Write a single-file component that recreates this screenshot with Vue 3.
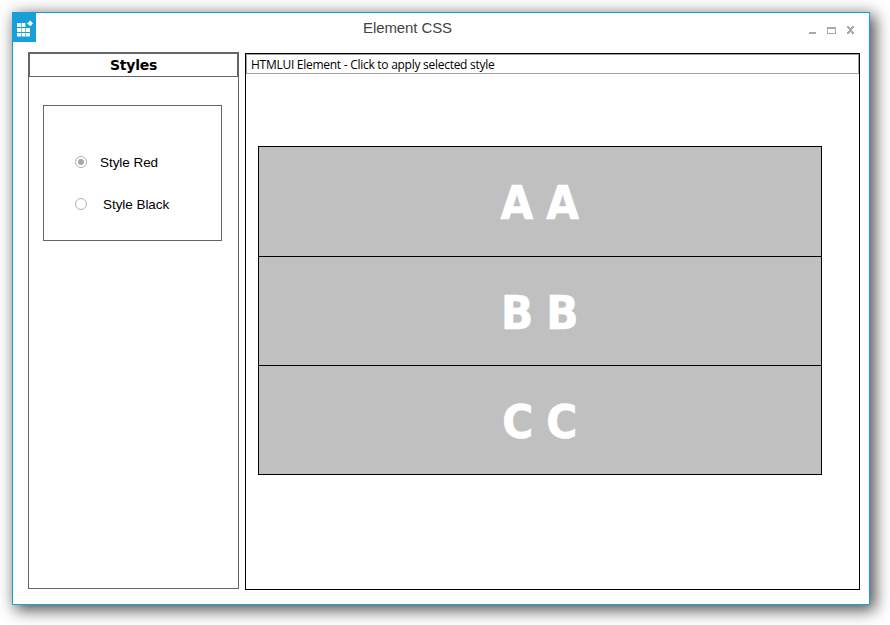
<script setup>
import { ref } from 'vue'

const selected = ref('red')
const styles = [
  { id: 'red', label: 'Style Red' },
  { id: 'black', label: 'Style Black' },
]
const rows = [
  { id: 'a', text: 'A A' },
  { id: 'b', text: 'B B' },
  { id: 'c', text: 'C C' },
]
</script>

<template>
  <div class="desktop">
    <div class="window">
      <header class="titlebar">
        <div class="logo">
          <svg width="24" height="30" viewBox="0 0 24 30">
            <path
              fill="#fff"
              d="M5 11h4v4H5zM9.6 11h3.8v4H9.6zM5 16h4v4H5zM9.6 16h3.8v4H9.6zM14 16h4v4h-4zM5 21h4v3.6H5zM9.6 21h3.8v3.6H9.6zM14 21h4v3.6h-4zM18.2 8.6l2.8 2.8-2.8 2.8-3.2-2.6z"
            />
          </svg>
        </div>
        <h1 class="title">Element CSS</h1>
        <div class="controls">
          <svg width="44" height="9" viewBox="0 0 44 9" shape-rendering="crispEdges" fill="#a9a9a9">
            <path d="M0 6h7v2H0z" />
            <path fill-rule="evenodd" d="M18 1h9v7h-9zM19 3v4h7V3z" />
            <path d="M38 0h2v1h1v1h1V1h1V0h2v2h-1v1h-1v2h1v1h1v2h-2V7h-1V6h-1v1h-1v1h-2V6h1V5h1V3h-1V2h-1z" />
          </svg>
        </div>
      </header>
      <main class="content">
        <section class="panel styles-panel">
          <h2 class="styles-title"><span>Styles</span></h2>
          <div class="group">
            <label v-for="s in styles" :key="s.id" class="option" :class="s.id" @click="selected = s.id">
              <span class="radio" :class="{ checked: selected === s.id }"></span>
              <span class="label">{{ s.label }}</span>
            </label>
          </div>
        </section>
        <section class="panel element-panel">
          <div class="element-title"><span>HTMLUI Element - Click to apply selected style</span></div>
          <div class="table">
            <div v-for="r in rows" :key="r.id" class="row" :class="'row-' + r.id">
              <span>{{ r.text }}</span>
            </div>
          </div>
        </section>
      </main>
    </div>
  </div>
</template>

<style>
body {
  background: #fff;
  overflow: hidden;
}
</style>

<style scoped>
* {
  box-sizing: border-box;
}
.desktop {
  width: 890px;
  height: 625px;
  padding: 12px;
  overflow: hidden;
}
.window {
  width: 858px;
  height: 593px;
  border: 1px solid #1a9fdb;
  background: #fff;
  box-shadow: 4px 4px 15px 1px rgba(0, 0, 0, 0.7);
}
.titlebar {
  display: flex;
  height: 39px;
}
.logo {
  width: 24px;
  height: 30px;
  margin: -1px 0 0 -1px;
  background: #169fdb;
}
.logo svg {
  display: block;
}
.title {
  flex: 1;
  margin: 0 0 0 327px;
  font: 400 15px/30px "Liberation Sans", Arial, sans-serif;
  letter-spacing: -0.1px;
  color: #444;
}
.controls {
  width: 45px;
  margin: 13px 15px 0 0;
}
.controls svg {
  display: block;
  overflow: visible;
}
.content {
  display: flex;
  padding-left: 15px;
}
.panel {
  height: 537px;
}
.styles-panel {
  width: 211px;
  border: 1px solid #666;
}
.styles-title {
  height: 24px;
  margin: 0;
  border: 1px solid #666;
  font: 700 14px/22px "DejaVu Sans", sans-serif;
  letter-spacing: -0.25px;
  text-align: center;
  color: #000;
}
.group {
  width: 179px;
  height: 136px;
  margin: 28px 0 0 14px;
  padding: 46px 0 0 31px;
  border: 1px solid #666;
}
.option {
  display: flex;
  align-items: center;
  height: 20px;
  margin-bottom: 22px;
  font: 13.5px/20px "Liberation Sans", Arial, sans-serif;
  letter-spacing: -0.05px;
  color: #000;
}
.label {
  padding-top: 1px;
}
.radio {
  display: flex;
  align-items: center;
  justify-content: center;
  width: 12px;
  height: 12px;
  margin-right: 13px;
  border: 1px solid #b0b0b0;
  border-radius: 50%;
}
.black .radio {
  margin-right: 16px;
}
.radio.checked::after {
  content: "";
  width: 6px;
  height: 6px;
  border-radius: 50%;
  background: #a8a8a8;
}
.element-panel {
  width: 615px;
  margin: 1px 0 0 6px;
  border: 1px solid #000;
}
.element-title {
  height: 20px;
  padding-left: 4px;
  border: 1px solid #a0a0a0;
  font: 12px/20px "Open Sans", "Noto Sans", sans-serif;
  letter-spacing: -0.27px;
  color: #000;
  white-space: nowrap;
}
.table {
  width: 564px;
  height: 329px;
  margin: 72px 0 0 12px;
  border: 1px solid #000;
  background: #c0c0c0;
}
.row {
  display: flex;
  align-items: center;
  justify-content: center;
  height: 109px;
  padding-top: 3px;
  border-bottom: 1px solid #000;
  font: 700 47px/60px "DejaVu Sans Condensed", "DejaVu Sans", sans-serif;
  font-stretch: semi-condensed;
  word-spacing: -2.4px;
  letter-spacing: 0.4px;
  color: #fff;
  -webkit-text-stroke: 0.7px #fff;
  white-space: pre;
}
.row-a {
  height: 110px;
  padding-top: 2px;
}
.row-c {
  height: 108px;
  border-bottom: 0;
}
</style>
